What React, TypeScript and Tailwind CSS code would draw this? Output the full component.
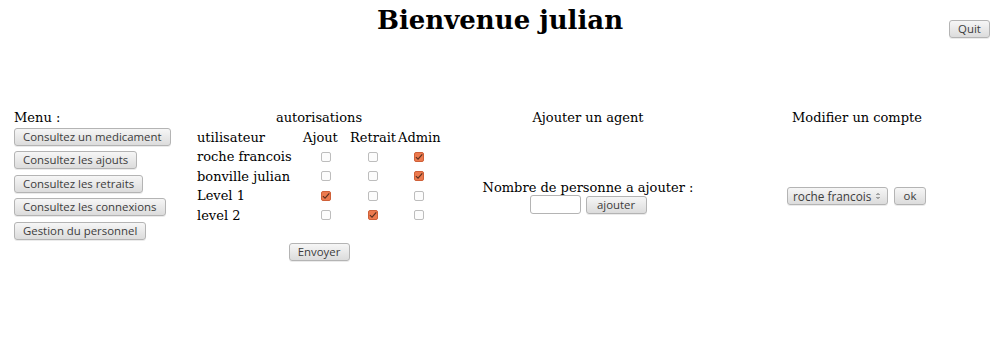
import React from "react";

const serif = { fontFamily: '"DejaVu Serif", serif' };

function Btn({ children, className = "" }: { children: React.ReactNode; className?: string }) {
  return (
    <button
      className={
        "h-[18px] rounded-[3px] border border-[#b4b4b4] bg-gradient-to-b from-[#f6f6f6] to-[#dcdcdc] px-[8px] text-[11.4px] leading-[16px] text-[#3c3c3c] shadow-[0_1px_0_rgba(0,0,0,0.08)] whitespace-nowrap " +
        className
      }
      style={{ fontFamily: '"Open Sans", "DejaVu Sans", sans-serif' }}
    >
      {children}
    </button>
  );
}

function Check({ on }: { on: boolean }) {
  if (on)
    return (
      <span className="inline-flex h-[10px] w-[10px] items-center justify-center rounded-[2px] border border-[#cf6038] bg-[#ec7a4e]">
        <svg width="9" height="8" viewBox="0 0 9 8">
          <path d="M1 4.2 L3.4 6.4 L8.2 1" fill="none" stroke="#5a3020" strokeWidth="1.3" />
        </svg>
      </span>
    );
  return <span className="inline-block h-[10px] w-[10px] rounded-[2px] border border-[#bdbdbd] bg-[#fcfcfc]" />;
}

const rows: [string, boolean, boolean, boolean][] = [
  ["roche francois", false, false, true],
  ["bonville julian", false, false, true],
  ["Level 1", true, false, false],
  ["level 2", false, true, false],
];

export default function App() {
  return (
    <div className="h-[359px] w-full bg-white text-[13px] text-black" style={serif}>
      <div className="grid grid-cols-[1fr_auto_1fr] items-start pt-[3px]">
        <div />
        <h1 className="text-[26px] font-bold leading-[34px]">Bienvenue julian</h1>
        <div className="flex justify-end pr-[10px] pt-[17px]">
          <Btn className="w-[41px] px-0">Quit</Btn>
        </div>
      </div>

      <div className="mt-[71px] flex pl-[14px]">
        {/* Menu */}
        <div className="w-[183px]">
          <div className="leading-[17px]">Menu :</div>
          <div className="mt-[2px] flex flex-col items-start gap-[5.4px]">
            <Btn>Consultez un medicament</Btn>
            <Btn>Consultez les ajouts</Btn>
            <Btn>Consultez les retraits</Btn>
            <Btn>Consultez les connexions</Btn>
            <Btn>Gestion du personnel</Btn>
          </div>
        </div>

        {/* autorisations */}
        <div className="flex w-[244px] flex-col items-center">
          <div className="leading-[17px]">autorisations</div>
          <div className="mt-[2px] w-full">
            <div className="flex h-[19.4px] items-center">
              <span className="w-[106px]">utilisateur</span>
              <span className="w-[47px]">Ajout</span>
              <span className="w-[48px]">Retrait</span>
              <span>Admin</span>
            </div>
            {rows.map(([n, a, r, ad]) => (
              <div key={n} className="flex h-[19.4px] items-center">
                <span className="w-[106px]">{n}</span>
                <span className="flex w-[46px] justify-center"><Check on={a} /></span>
                <span className="flex w-[48px] justify-center"><Check on={r} /></span>
                <span className="flex w-[44px] justify-center"><Check on={ad} /></span>
              </div>
            ))}
          </div>
          <Btn className="mt-[18px] w-[61px] px-0">Envoyer</Btn>
        </div>

        {/* Ajouter un agent */}
        <div className="flex w-[294px] flex-col items-center">
          <div className="leading-[17px]">Ajouter un agent</div>
          <div className="mt-[53px] leading-[17px]">Nombre de personne a ajouter :</div>
          <div className="mt-[-1px] flex items-center gap-[5px]">
            <span className="inline-block h-[19px] w-[51px] rounded-[3px] border border-[#b4b4b4] bg-white" />
            <Btn className="w-[61px] px-0">ajouter</Btn>
          </div>
        </div>

        {/* Modifier un compte */}
        <div className="flex w-[244px] flex-col items-center">
          <div className="leading-[17px]">Modifier un compte</div>
          <div className="mt-[61px] flex items-center gap-[6px] pr-[1px]">
            <Btn className="flex w-[101px] items-center justify-between pl-[5px] pr-[6px] text-[11.8px]">
              <span>roche francois</span>
              <svg width="6" height="10" viewBox="0 0 6 10">
                <path d="M1.5 4 L3 2.5 L4.5 4" fill="none" stroke="#555" strokeWidth="1" />
                <path d="M1.5 6 L3 7.5 L4.5 6" fill="none" stroke="#555" strokeWidth="1" />
              </svg>
            </Btn>
            <Btn className="w-[32px] px-0">ok</Btn>
          </div>
        </div>
      </div>
    </div>
  );
}
